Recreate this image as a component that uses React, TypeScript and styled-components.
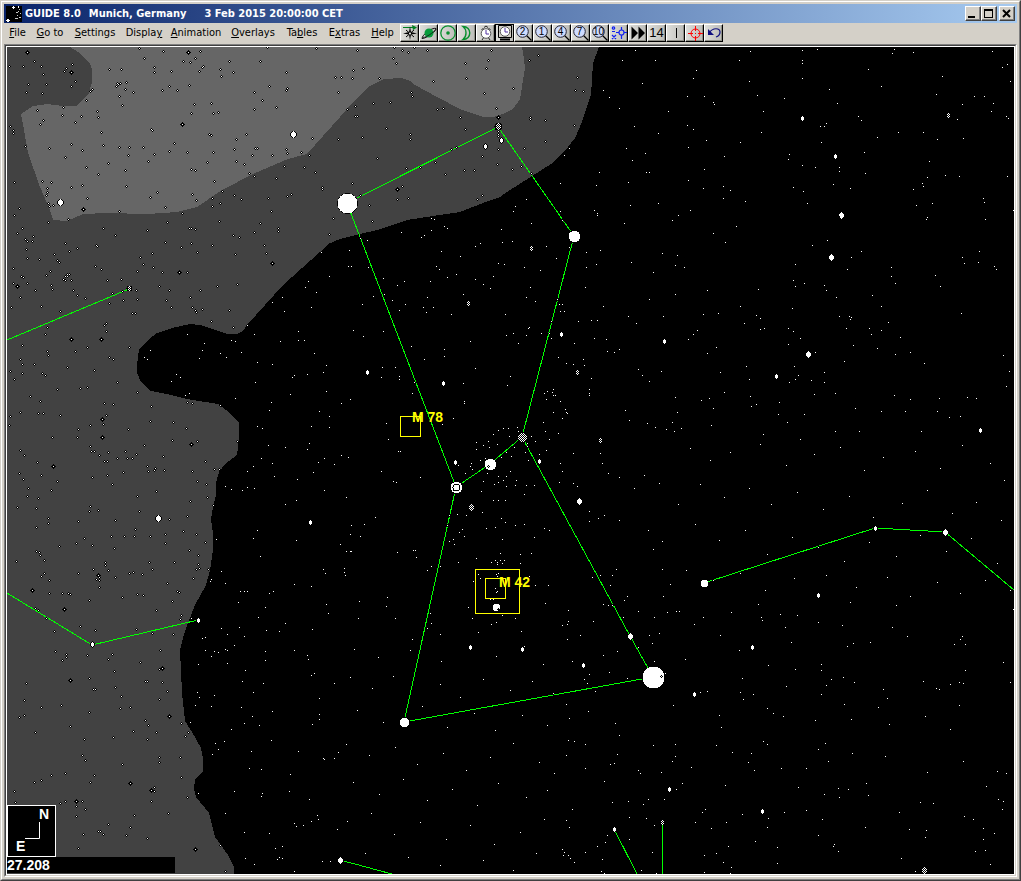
import React from "react";
import styled, { createGlobalStyle, css } from "styled-components";

const UI_FONT = `"DejaVu Sans Condensed", "DejaVu Sans", Tahoma, sans-serif`;
const CHART_FONT = `"Liberation Sans", Arial, sans-serif`;

const GlobalStyle = createGlobalStyle`
  * { box-sizing: border-box; }
  body { margin: 0; background: #d4d0c8; }
  button { font: inherit; color: inherit; }
`;

const Window = styled.main`
  min-height: 100vh;
  display: flex;
  flex-direction: column;
  background: #d4d0c8;
  border: 1px solid;
  border-color: #d4d0c8 #404040 #404040 #d4d0c8;
`;

const WindowEdge = styled.div`
  flex: 1;
  display: flex;
  flex-direction: column;
  border: 1px solid;
  border-color: #fff #808080 #808080 #fff;
  padding: 2px;
`;

const TitleBar = styled.header`
  display: flex;
  align-items: center;
  height: 19px;
  padding: 0 2px;
  background: linear-gradient(90deg, #0a246a, #a6caf0);
  color: #fff;
  font: bold 11px/19px ${UI_FONT};
`;

const AppIcon = styled.svg`
  flex: none;
  width: 16px;
  height: 16px;
  margin-right: 3px;
`;

const TitleText = styled.h1`
  flex: 1;
  margin: 0;
  font: inherit;
  white-space: nowrap;
  overflow: hidden;
  display: flex;
`;

const TitlePart = styled.span<{ $gap?: number }>`
  margin-left: ${(p) => p.$gap ?? 0}px;
`;

const bevel = css`
  background: #d4d0c8;
  border: 1px solid;
  border-color: #fff #404040 #404040 #fff;
  box-shadow: inset -1px -1px #808080;
`;

const CaptionButton = styled.button<{ $apart?: boolean }>`
  ${bevel}
  flex: none;
  width: 16px;
  height: 15px;
  padding: 0;
  margin-left: ${(p) => (p.$apart ? 2 : 0)}px;
  display: flex;
`;

const MenuBar = styled.nav`
  display: flex;
  align-items: flex-start;
  min-height: 21px;
  padding-top: 1px;
  color: #000;
  font: 11px/18px ${UI_FONT};
`;

const MenuItem = styled.button<{ $width: number }>`
  background: none;
  border: 0;
  padding: 0;
  width: ${(p) => p.$width}px;
  height: 18px;
  text-align: center;
  white-space: nowrap;
`;

const Toolbar = styled.div`
  display: flex;
  margin-left: 1px;
`;

const Tool = styled.button<{ $pressed?: boolean }>`
  width: 19px;
  height: 18px;
  padding: 0;
  border: 1px solid;
  border-color: ${(p) => (p.$pressed ? "#000" : "#fff #000 #000 #fff")};
  box-shadow: ${(p) => (p.$pressed ? "none" : "inset -1px -1px #909088")};
  background: linear-gradient(90deg, #dededa, #bcbcb8);
  display: flex;
  align-items: center;
  justify-content: center;
  font: 13px/16px ${CHART_FONT};
`;

const ClientEdge = styled.section`
  flex: 1;
  border: 1px solid;
  border-color: #808080 #fff #fff #808080;
`;

const ClientInner = styled.div`
  height: 100%;
  border: 1px solid;
  border-color: #404040 #d4d0c8 #d4d0c8 #404040;
`;

const ChartArea = styled.div`
  position: relative;
  height: 100%;
  border: 1px solid #fff;
  background: #000;
`;

const Sky = styled.svg`
  display: block;
  width: 100%;
  height: auto;
`;

const Legend = styled.div`
  position: absolute;
  left: 0;
  bottom: 1px;
  color: #fff;
  font: bold 14px/16px ${CHART_FONT};
`;

const Compass = styled.svg`
  display: block;
  width: 49px;
  height: 52px;
`;

const FieldWidth = styled.div`
  width: 168px;
  height: 16px;
  background: #000;
`;

/* Faint stars: plate origin on the chart, then x y pairs in thirds of a pixel. */
const PLATES: [number, number, string][] = [
  [0, 40, `418 25 490 34 565 37 601 34 433 55 550 64 586 55 571 67 610 79 607 82 598 94 463 82 463 97 514 94 328 88 364 88 103 64 124 79 70 79 28 79 130 103 199 85 193 94 217 73 214 97 226 124 214 139 139 133 85 133 79 157 127 160 277 148 271 154 259 181 352 130 361 130 355 133 349 139 379 127 376 148 358 169 400 157 367 196 487 151 508 139 532 151 568 136 583 193 574 220 634 190 640 220 655 217 688 64 661 88 664 109 700 97 781 64 859 97 808 139 862 145 859 151 763 157 787 181 763 208 829 202 802 22 949 25 1006 112 1015 157 190 202 187 226 112 211 130 241 121 253 226 247 244 229 292 214 295 232 304 277 310 316 457 271 454 268 31 259 40 271 40 280 76 319 148 325 214 313 247 331 196 352 259 382 295 403 325 370 358 322 388 322 385 346 376 391 430 322 445 364 463 343 508 334 523 310 562 337 574 388 586 391 622 367 640 337 628 283 634 286 709 298 739 283 703 328 766 325 772 325 757 346 709 364 733 373 748 400 763 409 817 346 859 328 862 340 904 337 937 295 928 346 913 382 853 379 829 415 946 397 967 442 967 448 1015 298 127 424 154 427 142 445 142 457 139 466 145 490 148 499 160 496 43 427 58 505 43 526 67 565 52 580 214 442 247 436 262 475 379 439 250 508 358 514 205 538 145 547 451 472 472 457 496 502 547 520 577 463 589 481 643 424 637 475 637 499 661 490 667 454 703 466 724 478 805 475 862 469 874 463 814 514 781 550 763 577 835 565 835 574 1000 535 988 583 658 544 700 586 718 592 637 616 706 643 793 616 799 640 592 637 574 610 544 622 568 565 574 565 586 568 502 547 442 571 496 607 457 640 460 682 421 652 430 673 412 694 310 565 346 586 289 616 292 619 232 625 208 634 196 610 163 643 172 661 178 667 118 658 82 655 79 628 76 598 82 604 97 604 100 589 40 685 64 709 70 712 40 730 52 739 82 730 106 751 61 772 34 802 124 799 151 694 139 706 154 736 157 748 190 718 196 709 202 703 208 703 202 709 196 721 214 721 220 751 232 766 256 775 286 679 304 688 322 721 364 718 337 760 367 754 370 781 409 751 412 778 328 790 181 814 142 862 136 883 397 820 406 820 319 850 313 856 319 874 487 697 562 697 478 739 508 751 499 781 514 802 571 772 577 802 586 811 589 817 607 808 601 751 652 739 712 733 688 811 634 844 700 862 742 856 763 883 562 883 817 787 847 772 853 814 895 874 934 802 949 757 916 742 925 724 988 709 964 637`],
  [340, 40, `163 22 223 22 187 31 205 37 262 31 160 55 169 70 52 31 70 85 40 91 4 112 37 115 118 115 280 124 376 70 445 61 454 31 439 85 379 115 433 160 520 145 568 61 595 46 712 112 706 151 730 154 214 157 217 169 151 187 100 190 46 199 22 208 46 229 52 229 139 265 67 292 112 355 211 283 211 298 292 208 310 205 361 232 376 268 469 205 571 232 571 238 616 241 616 304 703 256 553 325 349 322 334 328 286 367 241 382 199 385 316 403 373 391 403 391 427 349 475 328 472 373 517 388 544 379 574 400 37 430 61 466 88 496 97 544 172 448 187 439 172 478 205 475 412 478 427 466 475 274 475 283 475 289 673 346 688 325 661 430 769 436 778 397 865 427 877 361 859 325 916 340 919 397 928 397 886 31 847 61 946 61 907 130 790 151 808 172 838 205 985 214 883 259 955 280 763 511 772 520 772 526 853 550 997 541 955 490 1015 526 871 496 559 478 526 499 520 514 574 550 484 568 487 607 517 604 421 610 406 619 361 649 304 634 253 586 244 592 274 571 313 559 322 565 274 535 283 538 184 577 61 595 82 601 28 631 25 679 34 679 85 682 130 715 172 736 193 724 271 724 289 679 298 688 322 712 349 703 406 718 430 733 451 745 460 709 475 670 493 673 553 682 601 691 619 619 649 655 688 622 739 637 781 631 739 682 769 673 736 742 967 640 1012 646 874 667 940 697 1006 676 1006 763 928 778 865 829 970 829 889 850 790 799 754 841 772 841 715 844 658 793 667 793 661 814 673 814 634 844 652 778 667 541 661 514 571 742 559 772 586 784 496 823 568 862 565 865 559 886 520 880 499 886 604 880 628 880 634 895 763 895 799 898 973 898 370 763 262 772 250 802 280 802 259 817 334 823 196 793 178 811 157 781 133 763 100 769 67 793 40 871 70 889 130 874`],
  [0, 340, `67 16 142 34 145 46 226 34 262 22 388 22 61 58 67 73 103 73 31 94 67 100 43 118 127 100 136 106 202 82 328 52 340 58 283 91 352 127 262 142 241 145 172 148 412 157 91 169 121 184 61 217 31 229 28 256 115 220 130 220 181 226 313 190 340 193 319 226 307 238 310 253 271 256 235 268 232 292 157 292 307 292 454 199 451 244 385 268 520 247 559 265 517 301 562 187 577 190 592 304 712 304 574 313 433 316 376 334 409 343 397 355 382 355 352 355 490 349 271 319 274 334 283 334 325 337 298 346 313 364 322 364 61 331 73 346 112 367 58 400 70 418 124 406 160 379 172 424 154 451 85 445 82 469 115 475 109 505 52 502 277 412 322 406 370 397 337 433 442 379 445 394 466 385 463 391 493 391 577 394 616 364 643 388 658 388 592 424 619 433 622 472 640 496 571 484 469 454 412 469 418 514 508 538 562 529 271 499 268 514 295 511 235 544 346 541 145 535 145 550 109 562 253 595 229 610 277 616 334 589 373 589 403 589 451 589 406 568 343 625 496 583 496 610 550 574 589 583 616 607 649 598 568 631 595 646 178 619 109 634 118 637 121 646 133 661 49 664 133 700 124 709 148 721 148 760 187 760 205 760 211 763 235 700 280 688 316 667 316 676 325 691 295 706 298 712 289 718 298 721 298 742 346 712 388 700 400 697 427 703 457 688 448 667 523 667 595 673 598 685 589 688 625 688 580 715 634 718 631 724 502 730 532 754 538 757 517 784 412 763 430 766 367 772 268 781 97 751 106 805 115 811 139 835 241 859 286 871 163 874 469 811 544 826 541 838 574 835 409 868 457 880 520 883 613 10 607 31 598 55 451 31 433 52 442 58 694 1 706 4 841 4 895 1 913 1 661 40 679 52 724 37 772 67 817 73 943 40 979 76 970 97 883 106 877 112 922 103 766 127 871 163 979 154 706 175 814 187 808 211 568 160 556 166 529 103 541 112 514 124 661 196 958 214 988 229 988 262 934 259 772 259 787 265 928 310 922 328 805 316 856 322 973 355 955 367 1003 373 784 355 817 370 760 379 742 394 940 397 823 409 892 418 973 451 742 442 763 445 727 451 694 448 676 439 889 481 856 493 772 571 760 595 889 601 781 649 664 694 676 730 721 754 733 754 742 754 883 733 934 739 970 688 976 700 820 754 808 760 715 787 796 802 979 793 985 820 775 832 856 850 799 871 838 874 937 868 664 865 718 862 682 883 733 889`],
  [680, 40, `211 34 367 31 412 28 367 61 367 70 367 115 178 61 208 124 232 166 250 214 244 277 181 307 313 175 448 148 472 190 565 88 604 139 643 28 637 40 700 37 787 109 769 163 937 34 967 82 982 73 991 124 883 169 913 169 940 190 934 214 847 193 979 229 985 235 832 238 850 295 772 298 730 277 655 277 592 292 553 337 556 400 535 229 544 241 439 250 433 259 421 259 424 307 406 382 367 376 328 343 325 358 340 442 370 454 382 490 460 433 511 445 478 382 478 394 49 91 40 115 22 169 73 169 100 187 103 193 22 256 40 268 79 301 25 322 133 349 73 388 25 421 70 445 130 439 151 451 130 475 196 484 31 511 169 559 100 580 136 607 13 682 82 751 235 748 181 799 115 820 70 823 229 826 241 835 193 850 241 868 253 865 52 871 40 883 25 898 109 922 82 940 199 979 121 997 208 1018 133 1057 88 1075 64 1081 100 1105 94 1156 4 1165 211 1069 229 1093 214 1099 298 1087 295 1123 322 1147 373 1123 250 1183 361 1198 403 1063 466 1060 466 1174 538 1174 526 1105 604 1114 643 1066 691 1078 676 1114 724 1174 772 1114 778 1075 808 1132 841 1129 862 1072 889 1075 979 1039 988 994 970 946 844 820 781 739 766 706 853 670 847 652 895 667 898 634 943 679 949 688 1000 511 916 538 913 487 910 475 982 409 838 409 796 406 748 364 742 412 727 430 730 439 700 448 709 496 757 490 742 532 739 538 544 634 514 652 502 688 442 601 397 616 346 673 340 721 346 739 373 730 433 736 439 751 469 772 337 805 325 865 340 874 361 895 325 913 406 937 343 979 355 1006 346 1018 328 1027 394 1021 433 997 433 1027 493 964 520 916 499 865 478 829 508 829 514 832 511 838 568 865 574 883 604 871 625 847 604 799 577 766 646 730 634 709 634 682 661 892 592 925 646 943 691 937 733 970`],
  [0, 600, `166 154 199 163 199 172 187 181 262 166 337 163 325 178 421 187 343 214 481 151 478 208 487 205 487 247 436 244 442 244 502 274 478 298 268 235 280 268 286 268 346 262 364 289 361 325 391 322 211 241 79 250 73 301 73 346 58 352 124 322 184 316 268 337 211 379 106 397 253 418 340 412 400 394 436 361 445 376 469 397 442 418 508 349 544 370 571 367 565 397 556 409 541 472 478 472 478 487 544 532 562 592 247 466 256 481 367 493 196 520 154 526 124 541 103 547 283 526 271 547 391 550 463 562 463 574 454 571 454 604 505 640 43 574 46 607 181 610 196 604 247 604 229 619 229 649 256 628 325 673 295 694 301 694 310 703 250 703 403 646 391 682 379 706 442 715 235 745 661 736 676 814 607 115 616 112 616 151 643 154 655 157 634 169 676 148 682 151 703 136 682 190 736 211 727 244 760 277 790 250 796 181 796 154 883 151 922 166 925 178 943 220 934 226 1003 250 958 295 958 343 958 358 937 373 817 334 757 349 778 376 733 370 724 322 694 388 673 424 646 430 655 448 637 463 592 277 598 292 586 316 643 286 634 319 595 193 814 421 895 454 754 454 748 505 784 508 871 523 868 574 787 580 784 589 703 574 676 640 595 580 928 598 970 475 973 478 1003 475 1015 457 952 646 955 658 934 664 910 676 889 679 883 670 1012 688 733 697 808 700 826 745 847 739 832 778 838 772 847 775 736 775 763 793 883 814 967 784 991 784`],
  [560, 600, `130 13 145 16 157 16 193 1 25 31 7 76 25 64 61 106 22 118 37 184 130 166 172 154 148 217 88 223 73 238 82 250 106 274 202 235 190 52 268 106 298 100 277 130 235 142 283 184 322 37 358 34 403 73 430 52 376 178 316 220 421 277 442 274 340 316 478 346 484 382 469 436 517 457 481 106 514 37 595 13 604 52 607 61 661 43 712 46 676 82 694 127 775 67 847 76 880 130 862 139 931 127 871 7 1009 16 997 82 1042 109 1207 109 1201 118 1183 133 1216 133 1216 211 1198 247 1210 250 1171 253 1198 316 1330 187 1351 247 1360 28 1090 244 1129 265 1138 268 1096 349 1171 388 970 268 982 295 955 322 988 373 976 469 850 232 883 247 814 238 799 256 784 193 784 211 784 283 853 313 874 358 766 361 706 208 679 259 625 196 538 151 547 235 541 277 580 283 550 298 622 325 640 340 670 349 610 424 622 433 574 460 565 487 583 511 664 505 739 505 775 448 796 430 805 484 877 460 919 550 925 586 865 568 835 565 838 592 793 583 715 562 739 631 673 637 787 658 775 706 820 739 823 733 835 754 916 682 1018 637 1048 688 1081 607 1120 610 1102 517 1210 484 1312 514 1339 520 1279 559 1315 598 1330 604 1327 628 1213 649 1240 658 1270 685 1303 700 1270 718 1276 751 1246 754 1291 793 1099 691 1096 712 1024 775 1066 814 28 355 19 313 85 334 166 370 178 406 43 424 25 421 76 433 19 466 76 505 172 463 151 493 163 490 280 436 346 433 346 469 337 484 394 502 304 517 235 511 241 520 133 544 157 607 205 604 250 613 265 598 313 598 367 550 349 568 496 556 436 628 427 637 406 667 454 685 499 667 547 643 625 655 622 682 586 724 505 739 469 760 433 766 490 787 514 802 511 820 433 817 652 742 652 790 259 655 208 652 283 676 208 718 277 757 244 811 289 820 142 706 136 727 112 739 127 778 124 814 133 820 76 757 43 787 31 775 25 766 10 766 13 757 7 748 28 682 19 661 37 628`],
  [340, 340, `313 28 313 49 214 19 253 58 127 82 178 109 178 118 124 112 223 127 166 82 217 160 370 130 373 184 373 190 406 85 391 4 511 109 502 136 535 10 31 178 4 190 139 250 145 298 25 352 4 346 175 334 181 334 124 394 160 424 169 427 241 412 307 253 340 235 355 376 394 370 391 379 397 388 376 400 421 361 436 355 448 322 409 328 430 316 409 307 445 304 460 283 472 313 475 271 490 265 505 265 508 289 499 337 484 352 514 349 523 322 535 274 532 262 556 286 574 289 586 304 562 310 562 319 556 337 511 394 499 409 490 421 475 427 463 433 499 439 424 454 475 409 442 400 430 424 529 421 526 436 559 436 583 436 553 463 460 481 475 481 496 481 565 361 598 343 619 331 628 298 616 274 655 280 640 217 610 247 667 235 679 217 682 220 676 208 661 184 619 178 646 166 640 166 640 148 637 157 622 154 613 160 748 148 748 160 748 166 754 115 733 76 730 58 655 52 679 70 700 73 703 10 802 34 823 37 838 28 895 88 907 106 928 124 964 94 1006 172 1012 217 997 247 856 211 868 241 922 250 946 262 979 268 1003 274 787 304 781 340 787 370 700 340 661 370 667 394 658 427 700 430 712 439 805 400 838 412 883 445 913 406 958 430 1015 493 793 526 775 535 748 544 748 514 838 541 925 571 967 604 940 628 967 688 991 733 1009 814 982 817 970 769 943 832 958 880 928 886 895 814 862 769 829 688 817 706 811 736 781 706 757 712 790 793 805 796 760 844 721 886 682 898 682 853 667 856 616 790 625 736 586 736 568 709 541 670 541 643 574 640 526 556 553 553 583 592 613 565 628 571 487 598 439 565 466 562 496 547 484 535 427 517 379 526 352 523 367 568 358 577 373 589 340 598 343 613 328 604 355 667 409 655 454 667 466 661 472 667 481 661 493 661 472 673 487 670 481 640 475 700 469 703 472 709 415 703 421 715 400 724 469 757 472 754 466 745 451 778 460 778 385 802 415 820 397 835 415 877 454 853 469 847 487 826 526 835 544 874 262 691 274 679 301 679 220 631 226 631 229 652 172 637 34 634 31 634 19 634 1 613 34 556 31 583 61 589 73 553 106 532 19 472 13 685 13 697 16 706 142 772 58 784 55 835 139 799 166 835 271 820 262 865 274 850 301 883 217 898 328 526 322 556`],
  [680, 440, `30 24 92 60 150 36 241 12 320 75 402 42 481 21 552 90 610 51 705 33 781 84 846 15 930 69 972 120 60 132 132 171 207 144 273 192 351 156 430 207 507 168 580 231 668 189 741 150 816 219 890 186 965 240 45 252 117 300 196 270 261 342 336 291 415 321 492 363 567 306 648 348 720 285 798 333 873 294 951 369 20 390 100 420 180 399 255 450 342 414 438 405 528 441 621 411 690 468 771 426 840 459 915 420 990 450`],
  [340, 640, `44 28 115 52 210 31 305 64 391 22 468 49 553 18 610 72 32 112 98 145 161 109 300 133 362 172 429 118 510 151 577 125 640 160 52 211 131 246 247 199 322 262 404 221 465 271 546 226 621 256 20 313 88 346 167 322 232 374 310 340 379 391 452 352 520 310 599 367 643 400 41 427 118 463 191 418 262 481 337 448 412 496 476 430 560 472 622 451 22 544 95 520 163 583 241 547 319 598 391 556 463 613 542 577 613 538 76 640 205 652 301 676 430 661 520 690 590 640`],
];

type Kind = "oval" | "gem" | "disc" | "mesh" | "knot" | "lace" | "ring";
interface BrightStar { x: number; y: number; r: number; kind: Kind }
const s = (kind: Kind, r: number, list: [number, number][]): BrightStar[] =>
  list.map(([x, y]) => ({ x, y, r, kind }));

const BRIGHT: BrightStar[] = [
  ...s("oval", 1, [[485,146],[501,140],[802,118],[835,156],[664,341],[561,334],[776,376],[980,430],[367,372],[443,383],[455,462],[539,461],[310,522],[198,620],[470,647],[522,649],[583,665],[752,647],[694,694],[818,595],[669,789],[762,811],[614,829],[875,528],[92,644]]),
  ...s("gem", 2, [[293,134],[60,202],[158,518],[841,215],[831,257],[808,354],[630,636],[945,532],[340,860],[579,501]]),
  ...s("disc", 3, [[496,607],[704,583]]),
  ...s("disc", 4, [[404,722]]),
  ...s("disc", 5, [[574,236],[490,464]]),
  ...s("disc", 9, [[347,203]]),
  ...s("disc", 10, [[653,677]]),
  ...s("ring", 5, [[456,487]]),
  ...s("knot", 1, [[531,248],[662,822],[577,372],[948,115],[468,303],[600,440],[129,288]]),
  ...s("lace", 2, [[498,126],[471,507],[924,870]]),
  ...s("mesh", 4, [[522,437]]),
];

/* White pixels of each small star symbol, relative to its centre. */
const SYMBOLS: Partial<Record<Kind, [number, number][]>> = {
  knot: [[0,-2],[-1,-1],[1,-1],[0,0],[-1,1],[1,1],[0,2]],
  lace: [[0,-3],[-1,-2],[1,-2],[-2,-1],[0,-1],[2,-1],[-1,0],[1,0],[-2,1],[0,1],[2,1],[-1,2],[1,2],[0,3]],
};

/* Slightly brighter stars that carry a wider dark halo. */
const HALOED: [number, number][] = [
  [188,52],[27,52],[71,72],[182,124],[83,209],[17,286],[179,272],[272,263],[498,117],[102,419],[102,437],
  [191,444],[53,466],[98,575],[32,590],[64,609],[162,668],[70,680],[169,716],[130,783],[151,790],[76,801],[195,849],
  [71,339],[101,339],[397,189],
];

const LINES = [
  "347,203 498,127 574,236 522,437 490,464 456,487 347,203",
  "456,487 404,722 653,677 630,636 522,437",
  "7,340 129,289",
  "7,593 92,645 198,620",
  "704,583 875,528 945,532 1014,590",
  "340,860 392,874",
  "614,829 637,874",
  "662,822 662,874",
];

const MILKY_WAY =
  "7,47 599,47 593,63 591,95 582,122 575,138 568,147 551,164 532,176 507,192 500,197 483,203 460,212 433,216 407,220 377,230 360,234 340,239 328,244 320,252 283,285 247,325 243,331 237,334 227,334 200,325 190,324 172,328 157,333 148,340 139,349 137,365 137,373 141,382 151,391 167,394 187,399 218,404 230,413 239,423 239,438 237,455 225,464 219,472 216,483 216,495 212,512 211,520 213,533 213,550 210,570 206,585 195,605 188,623 183,638 180,650 182,693 185,721 192,732 201,748 203,758 203,771 195,779 194,789 196,797 209,813 215,837 228,855 234,867 234,874 7,874";

const MILKY_WAY_CORE =
  "70,47 78,52 90,63 92,70 92,82 89,93 77,106 63,106 47,104 33,106 21,114 24,130 28,153 40,187 50,210 53,220 67,221 83,214 107,213 147,214 177,212 197,207 222,190 253,174 288,159 307,154 340,117 353,102 368,87 384,79 402,78 410,81 415,85 437,97 462,110 483,117 493,117 505,113 513,109 520,99 525,68 523,52 522,47";

function faintPaths() {
  let halo = "";
  let core = "";
  for (const [ox, oy, text] of PLATES) {
    const v = text.split(" ").map(Number);
    for (let i = 0; i + 1 < v.length; i += 2) {
      const x = ox + Math.floor(v[i] / 3);
      const y = oy + Math.floor(v[i + 1] / 3);
      halo += `M${x} ${y - 1}h1v1h1v1h-1v1h-1v-1h-1v-1h1z`;
      core += `M${x} ${y}h1v1h-1z`;
    }
  }
  return { halo, core };
}
const FAINT = faintPaths();

function StarMark({ x, y, r, kind }: BrightStar) {
  if (kind === "oval") {
    return (
      <g>
        <path d={`M${x} ${y - 3}h1v1h1v1h1v3h-1v1h-1v1h-1v-1h-1v-1h-1v-3h1v-1h1z`} fill="#000" />
        <path d={`M${x} ${y - 2}h1v1h1v3h-1v1h-1v-1h-1v-3h1z`} fill="#fff" />
      </g>
    );
  }
  if (kind === "gem") {
    return (
      <g>
        <path d={`M${x - 1} ${y - 3}h3v1h1v1h1v3h-1v1h-1v1h-3v-1h-1v-1h-1v-3h1v-1h1z`} fill="#000" />
        <path d={`M${x} ${y - 3}h1v1h1v1h1v3h-1v1h-1v1h-1v-1h-1v-1h-1v-3h1v-1h1z`} fill="#fff" />
      </g>
    );
  }
  const cx = x + 0.5;
  const cy = y + 0.5;
  const pixels = SYMBOLS[kind];
  if (pixels) {
    return (
      <g>
        <circle cx={cx} cy={cy} r={r + 2} fill="#000" />
        <path d={pixels.map(([dx, dy]) => `M${x + dx} ${y + dy}h1v1h-1z`).join("")} fill="#fff" />
      </g>
    );
  }
  const size = r * 2 + 1;
  return (
    <g>
      <circle cx={cx} cy={cy} r={size / 2 + 1} fill="#000" />
      <circle cx={cx} cy={cy} r={size / 2 + 0.4} fill={kind === "mesh" ? "url(#mesh)" : "#fff"} />
      {kind === "ring" && <circle cx={cx} cy={cy} r="3.5" fill="none" stroke="#000" />}
    </g>
  );
}

function Target({ x, y, size }: { x: number; y: number; size: number }) {
  return <rect x={x + 0.5} y={y + 0.5} width={size - 1} height={size - 1} fill="none" stroke="#ff0" />;
}

function StarChart() {
  return (
    <Sky viewBox="7 47 1007 827" role="img" aria-label="Star chart of Orion">
      <defs>
        <pattern id="mesh" width="2" height="2" patternUnits="userSpaceOnUse">
          <path d="M0 0h1v1h-1zM1 1h1v1h-1z" fill="#fff" />
        </pattern>
      </defs>
      <g shapeRendering="crispEdges">
        <rect x="7" y="47" width="1007" height="827" fill="#000" />
        <polygon points={MILKY_WAY} fill="#424242" />
        <polygon points={MILKY_WAY_CORE} fill="#666" />
        <g fill="none" stroke="#0f0">
          {LINES.map((points) => <polyline key={points} points={points} />)}
        </g>
        {HALOED.map(([x, y]) => (
          <g key={`${x}-${y}`}>
            <path d={`M${x} ${y - 2}h1v1h1v1h1v1h-1v1h-1v1h-1v-1h-1v-1h-1v-1h1v-1h1z`} fill="#000" />
            <path d={`M${x} ${y}h1v1h-1z`} fill="#fff" />
          </g>
        ))}
        <path d={FAINT.halo} fill="#000" />
        <path d={FAINT.core} fill="#fff" />
        {BRIGHT.map((b) => <StarMark key={`${b.x}-${b.y}`} {...b} />)}
        <path d="M661 675h1v1h1v1h-1v1h-1v-1h-1v-1h1zM488 465h1v1h1v1h-1v1h-1v-1h-1v-1h1zM498 608h1v1h1v1h-1v2h-1v-2h-1v-1h1zM839 216h1v1h-1z" fill="#000" />
        <path d="M661 676h1v1h-1zM488 466h1v1h-1z" fill="#fff" />
        <Target x={400} y={416} size={21} />
        <Target x={485} y={578} size={21} />
        <Target x={475} y={569} size={45} />
      </g>
      <g fill="#ff0" fontFamily={CHART_FONT} fontSize="14" fontWeight="bold">
        <text x="412" y="422">M 78</text>
        <text x="499" y="587">M 42</text>
      </g>
    </Sky>
  );
}

const Icon = styled.svg`
  display: block;
  flex: none;
  width: 16px;
  height: 16px;
`;

function Magnifier({ label }: { label: string }) {
  return (
    <Icon viewBox="0 0 16 16">
      <path d="M10.5 10.5l5 5" stroke="#000" strokeWidth="1.2" />
      <circle cx="6.5" cy="6.5" r="5.8" fill="#cfdcff" stroke="#223" />
      <text x="6.5" y="10" textAnchor="middle" fontFamily={CHART_FONT} fontSize="10" fill="#000">{label}</text>
    </Icon>
  );
}

const TOOLS: { name: string; pressed?: boolean; icon: React.ReactNode }[] = [
  { name: "Find star", icon: (
    <Icon viewBox="0 0 16 16">
      <path d="M1 2.5h13" fill="none" stroke="#008020" />
      <path d="M10 0l5 2.5L11 5z" fill="#008020" />
      <path d="M8 1.500l1 5.500 6 1.500-6 1L8 15l-1-5.500-6-1L7 7z" fill="#000" />
      <path d="M4 5l8 7M12 5l-8 7" stroke="#000" />
      <path d="M8 7l1 1.500L8 10 7 8.500z" fill="#fff" />
    </Icon>) },
  { name: "Planets", icon: (
    <Icon viewBox="0 0 16 16">
      <path d="M1 13.500C1 10 11 2 15 3.500c1 2-9 10-14 10z" fill="none" stroke="#111" />
      <circle cx="8" cy="8" r="4.500" fill="#079b3a" />
      <path d="M2 12.500C6 12 12 8 15 4" fill="none" stroke="#111" strokeWidth=".8" />
    </Icon>) },
  { name: "Sun", icon: (
    <Icon viewBox="0 0 16 16">
      <circle cx="8" cy="8" r="7.200" fill="none" stroke="#08902e" strokeWidth="1.300" />
      <circle cx="8" cy="8" r="1.800" fill="#08902e" />
    </Icon>) },
  { name: "Moon", icon: (
    <Icon viewBox="0 0 16 16">
      <path d="M4 1.500c9 0 9 13 0 13 4-3 4-10 0-13z" fill="none" stroke="#08902e" strokeWidth="1.400" />
    </Icon>) },
  { name: "Set time", icon: (
    <Icon viewBox="0 0 16 16">
      <path d="M6 2.500l2-1.500 2 1.500M4 15l2-3M12 15l-2-3M3.500 5l2-2M12.500 5l-2-2" fill="none" stroke="#222" />
      <circle cx="8" cy="8.500" r="4.800" fill="#fff" stroke="#555" />
      <path d="M8 5v4h3" fill="none" stroke="#5030a0" />
    </Icon>) },
  { name: "Real time", pressed: true, icon: (
    <Icon viewBox="0 0 16 16">
      <path d="M1.500 .5h13v12h-13z" fill="#d4d0c8" stroke="#000" />
      <path d="M3 14.500h10" stroke="#000" strokeWidth="2" />
      <circle cx="8" cy="6.500" r="4.800" fill="#fff" stroke="#555" />
      <path d="M8 3v4h3" fill="none" stroke="#5030a0" />
    </Icon>) },
  ...["2", "1", "4", "7", "10"].map((n) => ({ name: `Zoom level ${n}`, icon: <Magnifier label={n} /> })),
  { name: "Star labels", icon: (
    <Icon viewBox="0 0 16 16">
      <g fill="none" stroke="#1020f0" strokeWidth="1.200">
        <circle cx="10.500" cy="7.500" r="2.500" />
        <path d="M10.500 2v3M10.500 10v4M5 7.500h3M13 7.500h3M1 10l4 4M5 10l-4 4M1 6.500h3" />
        <circle cx="2.500" cy="3" r="1.200" />
      </g>
    </Icon>) },
  { name: "Animate", icon: (
    <Icon viewBox="0 0 16 16"><path d="M1.500 1.500l6.500 6.500-6.500 6.500zM8.500 1.500l6.500 6.500-6.500 6.500z" fill="#000" /></Icon>) },
  { name: "Magnitude", icon: "14" },
  { name: "Vertical line", icon: (
    <Icon viewBox="0 0 16 16"><path d="M8.500 3v10" stroke="#000" /></Icon>) },
  { name: "Center", icon: (
    <Icon viewBox="0 0 16 16">
      <circle cx="8.500" cy="8.500" r="4.500" fill="none" stroke="#f00" />
      <path d="M8.500 1v5M8.500 11v5M1 8.500h5M11 8.500h5M8 8.500h1" stroke="#f00" />
    </Icon>) },
  { name: "Undo", icon: (
    <Icon viewBox="0 0 16 16">
      <path d="M3 8c4-6 11-5 11-1 0 3-1 4-4 5" fill="none" stroke="#101080" strokeWidth="1.200" />
      <path d="M2 4v6h6z" fill="#101080" />
    </Icon>) },
];

const MENU: [string, string, string, number][] = [
  ["", "F", "ile", 27], ["", "G", "o to", 38], ["", "S", "ettings", 52], ["Displa", "y", "", 46],
  ["", "A", "nimation", 58], ["", "O", "verlays", 56], ["Ta", "b", "les", 42], ["E", "x", "tras", 43], ["", "H", "elp", 33],
];

export default function App() {
  return (
    <>
      <GlobalStyle />
      <Window>
        <WindowEdge>
          <TitleBar>
            <AppIcon viewBox="0 0 16 16" aria-hidden="true">
              <rect width="16" height="16" fill="#000" />
              <g shapeRendering="crispEdges" fill="#fff">
                <path d="M6 1h3v1h-3zM7 0h1v3h-1zM12 0h1v2h-1zM0 14h4v1h-4zM1 13h2v3h-2z" />
                <path d="M10 6h2v1h-2zM12 5h1v1h-1zM11 9h1v1h-1zM9 12h3v1h-3zM13 11h2v1h-2zM14 7h1v1h-1zM13 3h1v1h-1z" fillOpacity=".8" />
              </g>
            </AppIcon>
            <TitleText>
              <TitlePart>GUIDE 8.0</TitlePart>
              <TitlePart $gap={8}>Munich, Germany</TitlePart>
              <TitlePart $gap={18}>3 Feb 2015 20:00:00 CET</TitlePart>
            </TitleText>
            <CaptionButton aria-label="Minimize">
              <svg width="14" height="13"><path d="M2 9h7v2h-7z" /></svg>
            </CaptionButton>
            <CaptionButton aria-label="Maximize">
              <svg width="14" height="13"><path d="M2 2h9v9h-9zM3 4v6h7v-6z" fillRule="evenodd" /></svg>
            </CaptionButton>
            <CaptionButton $apart aria-label="Close">
              <svg width="14" height="13"><path d="M3 3l7 7M10 3l-7 7" stroke="#000" strokeWidth="2" /></svg>
            </CaptionButton>
          </TitleBar>
          <MenuBar>
            {MENU.map(([before, key, after, width]) => (
              <MenuItem key={before + key + after} $width={width}>{before}<u>{key}</u>{after}</MenuItem>
            ))}
            <Toolbar>
              {TOOLS.map((t) => (
                <Tool key={t.name} aria-label={t.name} $pressed={t.pressed}>{t.icon}</Tool>
              ))}
            </Toolbar>
          </MenuBar>
          <ClientEdge>
            <ClientInner>
              <ChartArea>
                <StarChart />
                <Legend>
                  <Compass viewBox="0 0 49 52">
                    <rect x="0.5" y="0.5" width="48" height="51" fill="#000" stroke="#fff" />
                    <path d="M32.500 17v16.500h-14.500" fill="none" stroke="#fff" />
                    <text x="32" y="14" fill="#fff">N</text>
                    <text x="9" y="46" fill="#fff">E</text>
                  </Compass>
                  <FieldWidth>27.208</FieldWidth>
                </Legend>
              </ChartArea>
            </ClientInner>
          </ClientEdge>
        </WindowEdge>
      </Window>
    </>
  );
}
